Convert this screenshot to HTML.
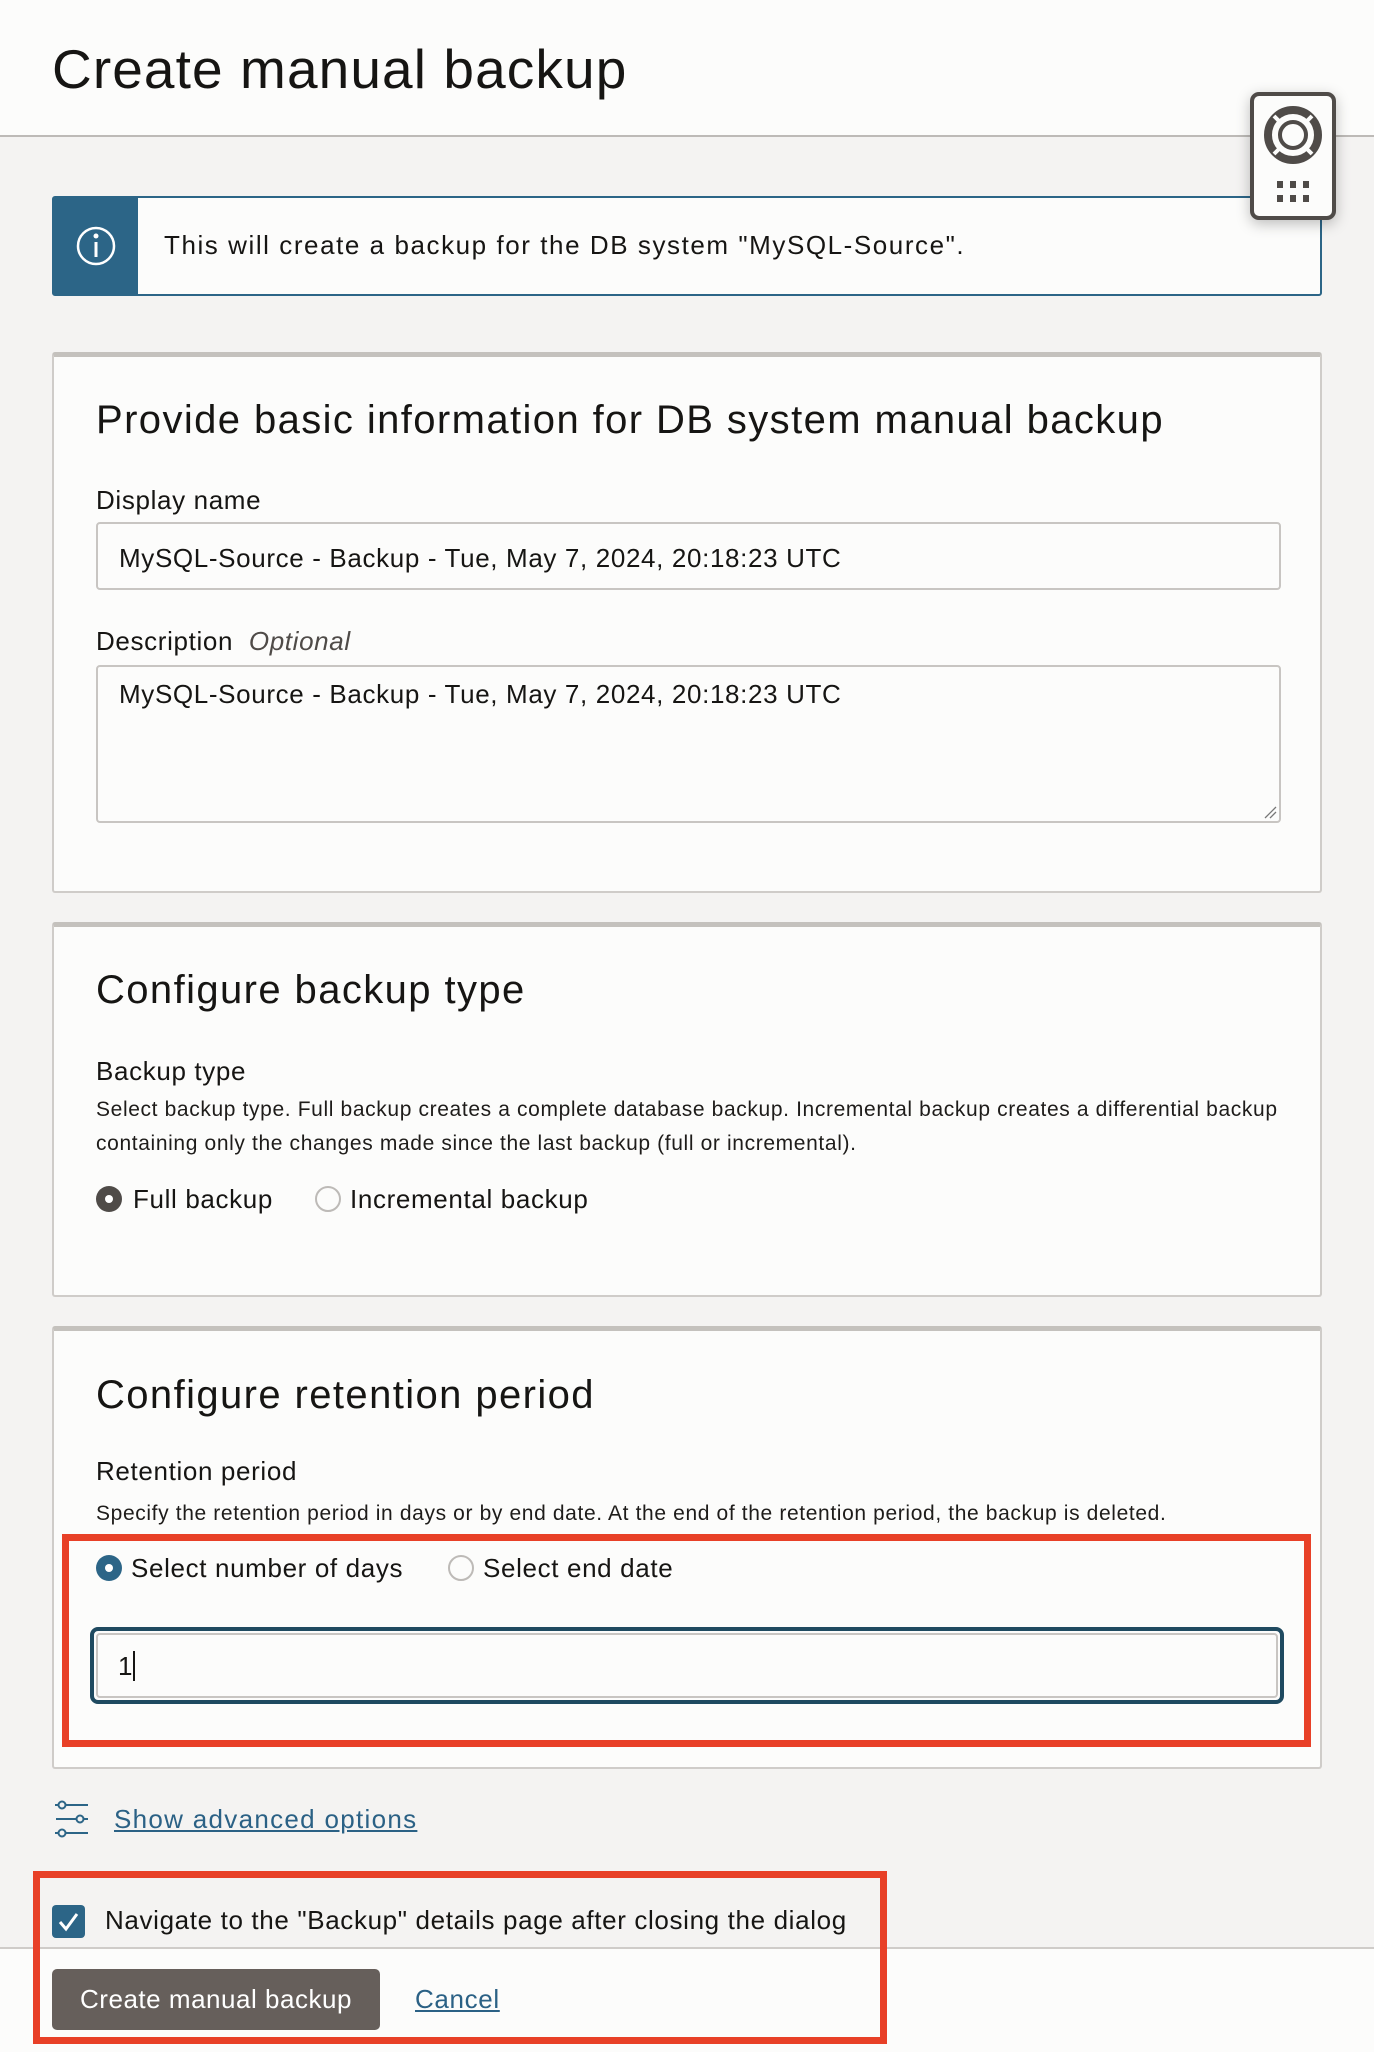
<!DOCTYPE html>
<html><head><meta charset="utf-8"><style>
*{box-sizing:border-box;margin:0;padding:0}
body{width:1374px;height:2052px;background:#f4f3f2;font-family:"Liberation Sans",Arial,sans-serif;color:#161513;position:relative;overflow:hidden;letter-spacing:0.04em}
.abs{position:absolute}
.hdr{left:0;top:0;width:1374px;height:137px;background:#fcfcfb;border-bottom:2px solid #bdbab7}
.title{left:52px;top:37px;font-size:55px;letter-spacing:0.02em}
.help{left:1250px;top:92px;width:86px;height:128px;background:#fcfcfb;border:4px solid #4f4b48;border-radius:9px;box-shadow:0 4px 14px rgba(0,0,0,.25);z-index:5}
.banner{left:52px;top:196px;width:1270px;height:100px;background:#fcfcfb;border:2px solid #2c6587;border-radius:3px}
.strip{left:0;top:0;width:84px;height:96px;background:#2c6587}
.card{left:52px;width:1270px;background:#fcfcfb;border:2px solid #cfccc9;border-top:5px solid #c4c1bd;border-radius:3px}
.h2{font-size:40px;left:42px;letter-spacing:0.035em}
.lbl{font-size:26px;left:42px}
.small{font-size:21px;left:42px;line-height:34px;color:#1e1c1a;letter-spacing:0.03em}
.inp{background:#fcfcfb;border:2px solid #c8c5c2;border-radius:4px}
.val{font-size:26px}
.radio{width:26px;height:26px;border-radius:50%}
.on{background:#2c6587;}
.on::after{content:"";position:absolute;left:9px;top:9px;width:8px;height:8px;border-radius:50%;background:#fff}
.off{border:2px solid #bdbab7;background:#fcfcfb}
.rtxt{font-size:26px}
.red{border:7px solid #e84027}
a{color:#2b6185}
</style></head><body>
<div class="abs hdr"></div>
<div class="abs title">Create manual backup</div>
<div class="abs help">
<svg width="78" height="120" viewBox="0 0 78 120" style="position:absolute;left:0;top:0">
<circle cx="39" cy="39" r="25" fill="none" stroke="#4f4b48" stroke-width="8"/>
<circle cx="39" cy="39" r="13" fill="#fcfcfb" stroke="#4f4b48" stroke-width="4"/>
<g stroke="#fcfcfb" stroke-width="4"><line x1="20" y1="20" x2="27" y2="27"/><line x1="58" y1="20" x2="51" y2="27"/><line x1="20" y1="58" x2="27" y2="51"/><line x1="58" y1="58" x2="51" y2="51"/></g>
<g fill="#4f4b48"><rect x="23" y="85" width="6" height="7"/><rect x="36" y="85" width="6" height="7"/><rect x="49" y="85" width="6" height="7"/><rect x="23" y="99" width="6" height="7"/><rect x="36" y="99" width="6" height="7"/><rect x="49" y="99" width="6" height="7"/></g>
</svg></div>
<div class="abs banner"><div class="abs strip">
<svg width="84" height="96" style="position:absolute;left:0;top:0"><circle cx="42" cy="48" r="18" fill="none" stroke="#fff" stroke-width="2.5"/><circle cx="42" cy="38" r="2.5" fill="#fff"/><rect x="40.5" y="44" width="3" height="15" fill="#fff"/></svg></div>
<div class="abs" style="left:110px;top:32px;font-size:26px;letter-spacing:0.06em">This will create a backup for the DB system "MySQL-Source".</div></div>

<div class="abs card" style="top:352px;height:541px">
<div class="abs h2" style="top:41px">Provide basic information for DB system manual backup</div>
<div class="abs lbl" style="top:128px">Display name</div>
<div class="abs inp" style="left:42px;top:165px;width:1185px;height:68px"><div class="abs val" style="left:21px;top:19px">MySQL-Source - Backup - Tue, May 7, 2024, 20:18:23 UTC</div></div>
<div class="abs lbl" style="top:269px">Description&nbsp; <i style="color:#4f4b48">Optional</i></div>
<div class="abs inp" style="left:42px;top:308px;width:1185px;height:158px"><div class="abs val" style="left:21px;top:12px">MySQL-Source - Backup - Tue, May 7, 2024, 20:18:23 UTC</div>
<svg width="14" height="14" style="position:absolute;right:2px;bottom:2px"><path d="M2 13L13 2M7 13L13 7" stroke="#777" stroke-width="1.3"/></svg></div>
</div>

<div class="abs card" style="top:922px;height:375px">
<div class="abs h2" style="top:41px">Configure backup type</div>
<div class="abs lbl" style="top:129px">Backup type</div>
<div class="abs small" style="top:166px">Select backup type. Full backup creates a complete database backup. Incremental backup creates a differential backup<br>containing only the changes made since the last backup (full or incremental).</div>
<div class="abs radio" style="left:42px;top:259px;background:#4f4b48"></div><div class="abs" style="left:51px;top:268px;width:8px;height:8px;border-radius:50%;background:#fff"></div>
<div class="abs rtxt" style="left:79px;top:257px">Full backup</div>
<div class="abs radio off" style="left:261px;top:259px"></div>
<div class="abs rtxt" style="left:296px;top:257px">Incremental backup</div>
</div>

<div class="abs card" style="top:1326px;height:443px">
<div class="abs h2" style="top:42px">Configure retention period</div>
<div class="abs lbl" style="top:125px">Retention period</div>
<div class="abs small" style="top:166px">Specify the retention period in days or by end date. At the end of the retention period, the backup is deleted.</div>
</div>
<div class="abs red" style="left:62px;top:1534px;width:1249px;height:213px"></div>
<div class="abs radio on" style="left:96px;top:1555px"></div>
<div class="abs rtxt" style="left:131px;top:1553px">Select number of days</div>
<div class="abs radio off" style="left:448px;top:1555px"></div>
<div class="abs rtxt" style="left:483px;top:1553px">Select end date</div>
<div class="abs" style="left:90px;top:1627px;width:1194px;height:77px;border:4px solid #1f4a60;border-radius:8px;background:#fcfcfb"><div class="abs" style="inset:2px;border:2px solid #c8c5c2;border-radius:4px"></div><div class="abs val" style="left:24px;top:20px">1<span style="display:inline-block;width:2px;height:30px;background:#161513;vertical-align:-6px"></span></div></div>

<svg class="abs" style="left:54px;top:1800px" width="36" height="38"><g stroke="#2c6587" stroke-width="2" fill="none"><circle cx="8" cy="5" r="3.5"/><line x1="12" y1="5" x2="34" y2="5"/><line x1="2" y1="19" x2="22" y2="19"/><circle cx="26" cy="19" r="3.5"/><line x1="30" y1="19" x2="34" y2="19"/><circle cx="8" cy="33" r="3.5"/><line x1="12" y1="33" x2="34" y2="33"/><line x1="1" y1="5" x2="4" y2="5"/><line x1="1" y1="33" x2="4" y2="33"/></g></svg>
<a class="abs" style="left:114px;top:1804px;font-size:26px;text-decoration:underline;letter-spacing:0.05em">Show advanced options</a>

<div class="abs" style="left:0;top:1947px;width:1374px;height:105px;background:#fcfcfb;border-top:2px solid #cfccc9"></div>
<div class="abs" style="left:52px;top:1905px;width:33px;height:33px;border-radius:4px;background:#2c6587"><svg width="33" height="33"><path d="M8 17l6 7 11-15" stroke="#fff" stroke-width="3" fill="none"/></svg></div>
<div class="abs rtxt" style="left:105px;top:1905px">Navigate to the "Backup" details page after closing the dialog</div>
<div class="abs" style="left:52px;top:1969px;width:328px;height:61px;background:#665f5b;border-radius:5px;color:#fff;font-size:26px;line-height:61px;text-align:center;letter-spacing:0.02em">Create manual backup</div>
<a class="abs" style="left:415px;top:1984px;font-size:26px;text-decoration:underline">Cancel</a>
<div class="abs red" style="left:33px;top:1871px;width:854px;height:173px"></div>
</body></html>
